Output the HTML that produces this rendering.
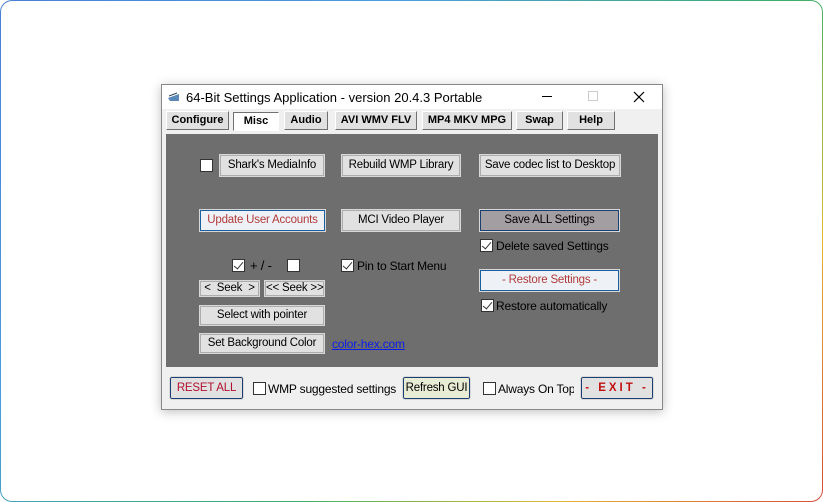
<!DOCTYPE html>
<html><head><meta charset="utf-8"><style>
*{margin:0;padding:0;box-sizing:border-box}
html,body{width:823px;height:502px;overflow:hidden;background:#fff;font-family:"Liberation Sans",sans-serif}
.frame{position:absolute;left:0;top:0;width:823px;height:502px;border-radius:12px;border:1.5px solid transparent;
background:linear-gradient(#fff,#fff) padding-box,linear-gradient(135deg,#4a7fd8,#4a9de0 30%,#3cb06a 60%,#e0b830 80%,#d84a3a) border-box}
.win{position:absolute;left:161px;top:84px;width:502px;height:326px;background:#f0f0f0;border:1px solid #888;box-shadow:0 2px 10px rgba(0,0,0,.25)}
.title{position:absolute;left:0;top:0;width:500px;height:24px;background:#fff;font-size:13px;color:#000}
.a{position:absolute}
.tab{position:absolute;top:26px;height:19px;background:#e1e1e1;border:1px solid #fff;border-right-color:#707070;border-bottom-color:#707070;font-weight:bold;font-size:11px;text-align:center;line-height:17px}
.panel{position:absolute;left:4px;top:49px;width:492px;height:233px;background:#6e6e6e}
.btn{position:absolute;background:#e1e1e1;border:1px solid #adadad;outline:1px solid #d8d8d8;font-size:11.5px;letter-spacing:-0.2px;text-align:center;color:#000;white-space:nowrap;overflow:hidden}
.cb{position:absolute;width:13px;height:13px;background:#fff;border:1px solid #333}
.cb.c::after{content:"";position:absolute;left:3px;top:0px;width:4px;height:8px;border:solid #333;border-width:0 1.5px 1.5px 0;transform:rotate(40deg)}
.t{position:absolute;font-size:12px;letter-spacing:-0.2px;color:#000;white-space:nowrap}
</style></head><body>
<div class="frame"></div>
<div class="win">
 <div class="title">
  <svg class="a" style="left:5px;top:6px" width="14" height="12"><path d="M1 7 L12 3 L12 10 L3 10 Z" fill="#5a88b8"/><path d="M2 5 L10 2" stroke="#345" /></svg>
  <span class="a" style="left:24px;top:5px">64-Bit Settings Application - version 20.4.3 Portable</span>
  <span class="a" style="left:380px;top:11px;width:10px;height:1px;background:#000"></span>
  <span class="a" style="left:426px;top:6px;width:10px;height:10px;border:1px solid #ccc"></span>
  <svg class="a" style="left:471px;top:6px" width="12" height="12"><path d="M1 1L11 11M11 1L1 11" stroke="#000" stroke-width="1.2"/></svg>
 </div>
 <div class="tab" style="left:4px;width:63px">Configure</div>
 <div class="tab" style="left:71px;width:46px;background:#fff;border:1px solid #707070;border-right-color:#fff;border-bottom-color:#fff;top:27px">Misc</div>
 <div class="tab" style="left:122px;width:44px">Audio</div>
 <div class="tab" style="left:173px;width:82px">AVI WMV FLV</div>
 <div class="tab" style="left:260px;width:90px">MP4 MKV MPG</div>
 <div class="tab" style="left:354px;width:47px">Swap</div>
 <div class="tab" style="left:405px;width:48px">Help</div>
 <div class="panel"></div>
</div>
<div class="cb" style="left:200px;top:159px"></div>
<div class="btn" style="left:220px;top:155px;width:104px;height:21px;line-height:19px">Shark's MediaInfo</div>
<div class="btn" style="left:342px;top:155px;width:118px;height:21px;line-height:19px">Rebuild WMP Library</div>
<div class="btn" style="left:480px;top:155px;width:140px;height:21px;line-height:19px">Save codec list to Desktop</div>
<div class="btn" style="left:200px;top:210px;width:125px;height:21px;line-height:19px;color:#b03a3a;border:1px solid #1a5fa0;background:#eef2f6">Update User Accounts</div>
<div class="btn" style="left:342px;top:210px;width:118px;height:21px;line-height:19px">MCI Video Player</div>
<div class="btn" style="left:480px;top:210px;width:139px;height:21px;line-height:19px;background:#a39ea2;border:1px solid #1a3f70">Save ALL Settings</div>
<div class="cb c" style="left:480px;top:239px"></div><div class="t" style="left:496px;top:239px">Delete saved Settings</div>
<div class="cb c" style="left:232px;top:259px"></div><div class="t" style="left:250px;top:258px;font-size:13px">+ / -</div>
<div class="cb" style="left:287px;top:259px"></div>
<div class="cb c" style="left:341px;top:259px"></div><div class="t" style="left:357px;top:259px">Pin to Start Menu</div>
<div class="btn" style="left:480px;top:270px;width:139px;height:21px;line-height:19px;color:#b03a3a;border:1px solid #1a5fa0;background:#eef2f6">- Restore Settings -</div>
<div class="cb c" style="left:481px;top:299px"></div><div class="t" style="left:496px;top:299px">Restore automatically</div>
<div class="btn" style="left:200px;top:281px;width:59px;height:15px;line-height:13px">&lt;&nbsp; Seek &nbsp;&gt;</div>
<div class="btn" style="left:265px;top:281px;width:59px;height:15px;line-height:13px">&lt;&lt; Seek &gt;&gt;</div>
<div class="btn" style="left:200px;top:306px;width:124px;height:19px;line-height:17px">Select with pointer</div>
<div class="btn" style="left:200px;top:334px;width:124px;height:19px;line-height:17px">Set Background Color</div>
<div class="t" style="left:332px;top:337px;color:#0a1ee6;text-decoration:underline">color-hex.com</div>
<div class="btn" style="left:170px;top:377px;width:73px;height:22px;line-height:20px;color:#b01030;border:1px solid #1a3f70;border-radius:2px">RESET ALL</div>
<div class="cb" style="left:253px;top:382px"></div><div class="t" style="left:268px;top:382px">WMP suggested settings</div>
<div class="btn" style="left:403px;top:377px;width:67px;height:22px;line-height:20px;background:#e8ecd4;border:1px solid #1a3f70;border-radius:2px">Refresh GUI</div>
<div class="cb" style="left:483px;top:382px"></div><div class="t" style="left:498px;top:382px;width:76px;overflow:hidden">Always On Top</div>
<div class="btn" style="left:581px;top:377px;width:72px;height:22px;line-height:20px;color:#c01010;font-weight:bold;letter-spacing:3px;border:1px solid #1a3f70;border-radius:2px">- EXIT -</div>
</body></html>
